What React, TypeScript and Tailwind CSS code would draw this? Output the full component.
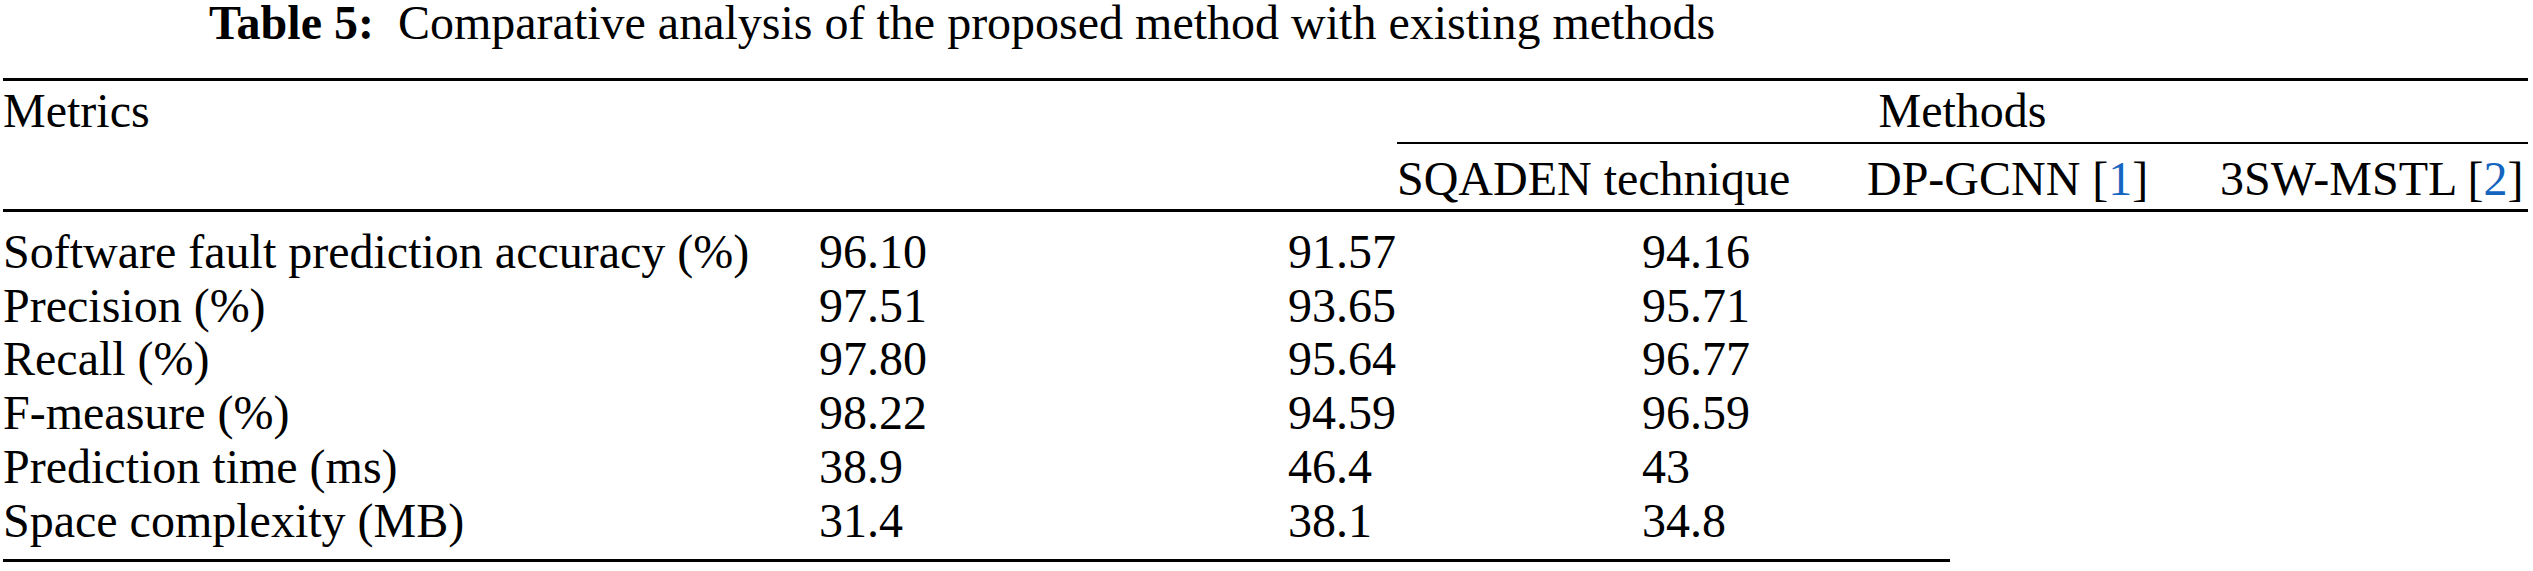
const rows = [
  ["Software fault prediction accuracy (%)", "96.10", "91.57", "94.16"],
  ["Precision (%)", "97.51", "93.65", "95.71"],
  ["Recall (%)", "97.80", "95.64", "96.77"],
  ["F-measure (%)", "98.22", "94.59", "96.59"],
  ["Prediction time (ms)", "38.9", "46.4", "43"],
  ["Space complexity (MB)", "31.4", "38.1", "34.8"],
]

function Ref({ n }: { n: string }) {
  return (
    <>
      [<span className="text-[#1565c0]">{n}</span>]
    </>
  )
}

export default function App() {
  return (
    <div className="w-[2533px] h-[571px] overflow-hidden bg-white text-black font-['Liberation_Serif',serif] text-[48px]">
      <div className="pl-[209px] pt-[2px] leading-[42px] whitespace-pre">
        <span className="font-bold">Table 5:</span>
        {"  "}Comparative analysis of the proposed method with existing methods
      </div>

      <div className="mt-[34px] ml-[3px] w-[2525px] border-t-[3px] border-b-[3px] border-black flex">
        <div className="w-[1394px] pt-[3px] leading-[53.7px]">Metrics</div>
        <div className="flex-1 flex flex-col">
          <div className="pt-[3px] pb-[4.3px] leading-[53.7px] text-center border-b-2 border-black">
            Methods
          </div>
          <div className="flex pt-[8px] pb-[3.3px] leading-[53.7px] whitespace-nowrap">
            <div className="w-[470px]">SQADEN technique</div>
            <div className="w-[353px]">
              DP-GCNN <Ref n="1" />
            </div>
            <div className="flex-1">
              3SW-MSTL <Ref n="2" />
            </div>
          </div>
        </div>
      </div>

      <div className="ml-[3px] w-[1947px] pt-[13px] pb-[11.8px] border-b-[3px] border-black">
        {rows.map((r) => (
          <div key={r[0]} className="flex leading-[53.7px] whitespace-nowrap">
            <div className="w-[816px]">{r[0]}</div>
            <div className="w-[469px]">{r[1]}</div>
            <div className="w-[354px]">{r[2]}</div>
            <div className="flex-1">{r[3]}</div>
          </div>
        ))}
      </div>
    </div>
  )
}
